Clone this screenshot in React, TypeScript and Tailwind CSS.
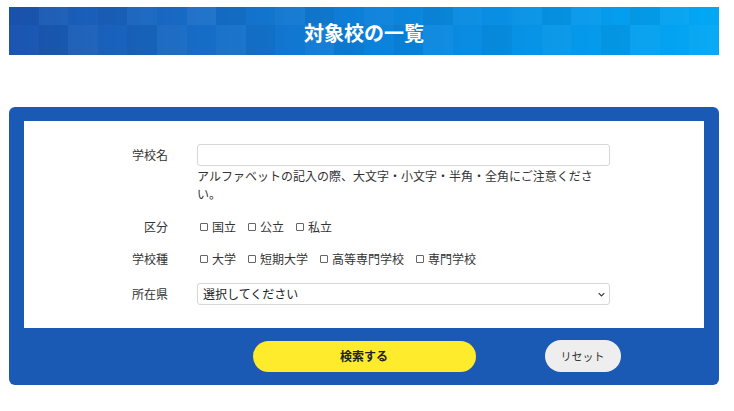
import * as React from "react";

const font = { fontFamily: '"Noto Sans CJK JP", "Noto Sans", sans-serif' };

// mosaic tint for the header band, two rows of tiles
const topTiles = [
  "bg-black/4", "bg-white/3", "bg-transparent", "bg-black/4", "bg-white/3", "bg-transparent",
  "bg-white/5", "bg-black/4", "bg-transparent", "bg-white/3", "bg-black/4", "bg-transparent",
  "bg-white/3", "bg-transparent", "bg-black/4", "bg-white/3", "bg-transparent", "bg-white/3",
  "bg-black/4", "bg-white/3", "bg-transparent", "bg-black/4", "bg-white/3", "bg-transparent",
];
const bottomTiles = [
  "bg-transparent", "bg-black/4", "bg-white/3", "bg-transparent", "bg-black/4", "bg-white/3",
  "bg-transparent", "bg-white/3", "bg-black/4", "bg-transparent", "bg-white/3", "bg-black/4",
  "bg-transparent", "bg-black/4", "bg-white/3", "bg-transparent", "bg-black/4", "bg-transparent",
  "bg-white/3", "bg-transparent", "bg-black/4", "bg-white/3", "bg-transparent", "bg-white/3",
];

function Check({ label }: { label: string }) {
  return (
    <label className="flex items-center gap-[4px]">
      <input
        type="checkbox"
        className="appearance-none w-[8px] h-[8px] border border-[#666] rounded-[1px] bg-white"
      />
      <span>{label}</span>
    </label>
  );
}

function Row({ label, children }: { label: string; children: React.ReactNode }) {
  return (
    <div className="flex items-center gap-[29px] h-[18px]">
      <div className="w-[144px] text-right">{label}</div>
      <div className="flex items-center gap-[12px] pl-[3px]">{children}</div>
    </div>
  );
}

export default function App() {
  return (
    <div className="w-[734px] h-[411px] bg-white text-[12px] text-[#333]" style={font}>
      {/* Title band */}
      <div className="relative ml-[9px] mt-[7px] w-[710px] h-[48px] overflow-hidden bg-linear-to-r from-[#1b55b0] via-[#0c80d9] to-[#02a8f5]">
        <div className="grid grid-cols-[repeat(24,1fr)] grid-rows-[18px_30px] h-full">
          {topTiles.map((c, i) => (
            <div key={"t" + i} className={c} />
          ))}
          {bottomTiles.map((c, i) => (
            <div key={"b" + i} className={c} />
          ))}
        </div>
        <h1 className="absolute inset-0 flex items-center justify-center pt-[4px] text-[20px] font-bold text-white">
          対象校の一覧
        </h1>
      </div>

      {/* Search panel */}
      <div className="ml-[9px] mt-[52px] w-[710px] rounded-[6px] bg-[#1a5ab4] px-[15px] pt-[14px] pb-[13px]">
        <div className="bg-white pt-[23px] pb-[23px] flex flex-col">
          <div className="flex items-start gap-[29px]">
            <div className="w-[144px] text-right leading-[22px]">学校名</div>
            <div className="flex flex-col">
              <input
                type="text"
                className="w-[413px] h-[22px] border border-[#d6d6d6] rounded-[3px] px-[6px] outline-none"
              />
              <p className="w-[402px] mt-[1px] leading-[18px]">
                アルファベットの記入の際、大文字・小文字・半角・全角にご注意ください。
              </p>
            </div>
          </div>

          <div className="mt-[15px] flex flex-col gap-[14px]">
            <Row label="区分">
              <Check label="国立" />
              <Check label="公立" />
              <Check label="私立" />
            </Row>
            <Row label="学校種">
              <Check label="大学" />
              <Check label="短期大学" />
              <Check label="高等専門学校" />
              <Check label="専門学校" />
            </Row>
          </div>

          <div className="mt-[15px] flex items-center gap-[29px]">
            <div className="w-[144px] text-right">所在県</div>
            <div className="relative w-[413px]">
              <select className="appearance-none w-full h-[22px] border border-[#d6d6d6] rounded-[3px] bg-white pl-[5px] pr-[20px] text-[12px] text-[#222] outline-none">
                <option>選択してください</option>
              </select>
              <svg
                viewBox="0 0 10 6"
                className="absolute right-[5px] top-[9px] w-[7px] h-[5px] pointer-events-none"
              >
                <path d="M1 1l4 4 4-4" fill="none" stroke="#333" strokeWidth="1.6" />
              </svg>
            </div>
          </div>
        </div>

        <div className="mt-[12px] grid grid-cols-[1fr_auto_1fr] items-center">
          <div />
          <button className="w-[223px] h-[31px] rounded-full bg-[#fdeb2c] text-[12px] font-bold text-[#222]">
            検索する
          </button>
          <div className="pl-[69px]">
            <button className="w-[76px] h-[32px] rounded-full bg-[#eeeeee] text-[11px] text-[#333]">
              リセット
            </button>
          </div>
        </div>
      </div>
    </div>
  );
}
